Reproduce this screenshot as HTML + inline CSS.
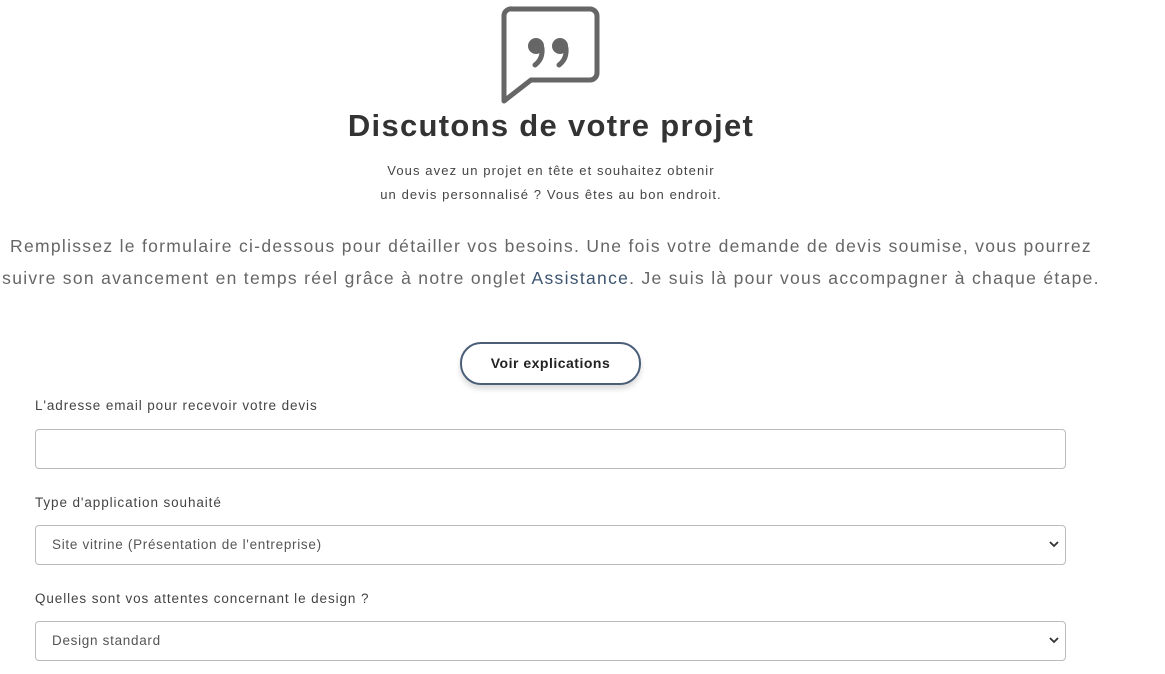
<!DOCTYPE html>
<html><head><meta charset="utf-8"><style>
body{margin:0;width:1165px;height:674px;background:#fff;font-family:"Liberation Sans",sans-serif;color:#333;position:relative;overflow:hidden}
.a{position:absolute}
.c{left:0;width:1102px;text-align:center}
.lbl{position:absolute;left:35px;font-size:13.5px;color:#444;letter-spacing:0.9px}
.box{position:absolute;left:35px;width:1029px;height:38px;border:1.5px solid #bbb;border-radius:4px;box-sizing:content-box}
.sel{font-size:13.5px;color:#555;line-height:38px;padding-left:16px;width:1013px;letter-spacing:0.7px}
.chev{position:absolute;right:6px;top:14px}
</style></head><body>
<svg class="a" style="left:498px;top:4px" width="106" height="102" viewBox="0 0 106 102">
<path d="M14 5 H92 A7 7 0 0 1 99 12 V69 A7 7 0 0 1 92 76 H33 L6 97 V12 A7 7 0 0 1 14 5 Z" fill="none" stroke="#666" stroke-width="5" stroke-linejoin="round"/>
<circle cx="38" cy="42" r="8" fill="#666"/><path d="M44 44 Q45 55 37 61" stroke="#666" stroke-width="5" fill="none" stroke-linecap="round"/>
<circle cx="62" cy="42" r="8" fill="#666"/><path d="M68 44 Q69 55 61 61" stroke="#666" stroke-width="5" fill="none" stroke-linecap="round"/>
</svg>
<div class="a c" style="top:108px;font-size:31px;font-weight:bold;color:#333;letter-spacing:1.3px">Discutons de votre projet</div>
<div class="a c" style="top:159px;font-size:13px;line-height:24px;color:#444;letter-spacing:1.1px">Vous avez un projet en tête et souhaitez obtenir<br>un devis personnalisé ? Vous êtes au bon endroit.</div>
<div class="a c" style="top:230px;font-size:17.5px;line-height:32px;color:#666;letter-spacing:1.3px">Remplissez le formulaire ci-dessous pour détailler vos besoins. Une fois votre demande de devis soumise, vous pourrez<br>suivre son avancement en temps réel grâce à notre onglet <span style="color:#3d5570">Assistance</span>. Je suis là pour vous accompagner à chaque étape.</div>
<div class="a" style="left:460px;top:342px;width:177px;height:39px;border:2px solid #4a5e78;border-radius:21px;box-shadow:0 4px 6px rgba(0,0,0,.15);text-align:center;line-height:39px;font-size:14px;font-weight:bold;color:#222;letter-spacing:0.5px">Voir explications</div>
<div class="lbl" style="top:398px">L'adresse email pour recevoir votre devis</div>
<div class="box" style="top:429px"></div>
<div class="lbl" style="top:495px">Type d'application souhaité</div>
<div class="box sel" style="top:525px">Site vitrine (Présentation de l'entreprise)<svg class="chev" width="10" height="8"><path d="M1 2 L5 6 L9 2" stroke="#333" stroke-width="1.8" fill="none"/></svg></div>
<div class="lbl" style="top:591px">Quelles sont vos attentes concernant le design ?</div>
<div class="box sel" style="top:621px">Design standard<svg class="chev" width="10" height="8"><path d="M1 2 L5 6 L9 2" stroke="#333" stroke-width="1.8" fill="none"/></svg></div>
</body></html>
